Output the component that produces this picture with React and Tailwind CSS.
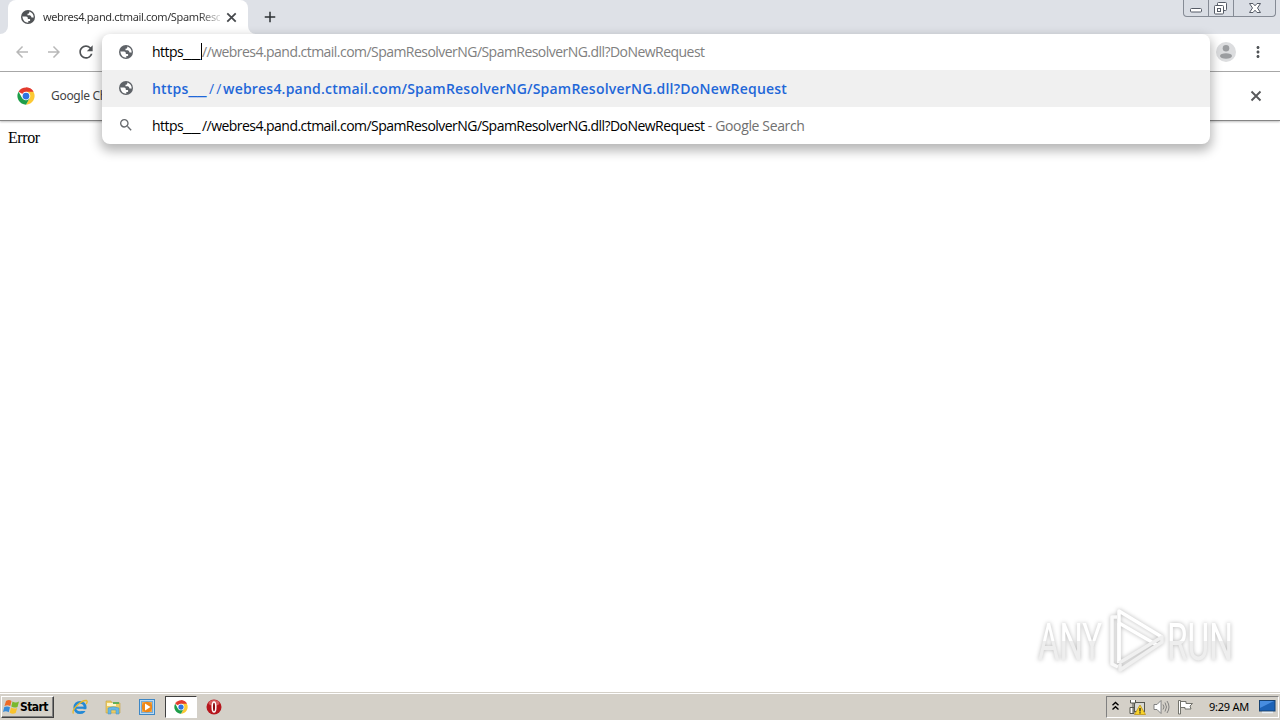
import React from "react";
import { MdArrowBack, MdArrowForward, MdRefresh, MdAdd, MdSearch, MdMoreVert } from "react-icons/md";

const HOST_PATH = "webres4.pand.ctmail.com/SpamResolverNG/SpamResolverNG.dll?DoNewRequest";

function Globe({ className }) {
  return (
    <svg viewBox="0 0 16 16" className={className}>
      <circle cx="8" cy="8" r="7" fill="currentColor" />
      <path d="M2.300 7.500H6.200Q7.800 7.500 7.800 9V10H9.800Q10.800 11 9.800 12H8.300V13.700Q3.200 13.700 2.300 7.500Z" fill="#fff" />
      <path d="M9.300 2.500V3.500Q9.300 4.700 7.500 4.800V6.300H9.800Q11.300 6.500 11.500 8.500H13.700Q13.700 4 9.300 2.500Z" fill="#fff" />
    </svg>
  );
}

function Cross({ className }) {
  return (
    <svg viewBox="0 0 16 16" className={className} fill="none" stroke="currentColor" strokeWidth="1.900">
      <path d="M3.500 3.500L12.500 12.500M12.500 3.500L3.500 12.500" />
    </svg>
  );
}

function ChromeLogo({ className }) {
  return (
    <svg viewBox="0 0 48 48" className={className}>
      <circle cx="24" cy="24" r="23" fill="#fff" />
      <path d="M24 24 L4.1 12.5 A23 23 0 0 1 43.9 12.5 Z" fill="#e33b2e" />
      <path d="M24 1 A23 23 0 0 1 43.9 12.5 H24 Z" fill="#e33b2e" />
      <path d="M43.9 12.5 A23 23 0 0 1 24 47 L34 29.5 L24 12.5 Z" fill="#fcc934" />
      <path d="M24 47 A23 23 0 0 1 4.1 12.5 L14 29.7 L34 29.5 Z" fill="#1e9e4a" />
      <circle cx="24" cy="24" r="11.5" fill="#fff" />
      <circle cx="24" cy="24" r="9" fill="#2f74e0" />
    </svg>
  );
}

function WindowControls() {
  return (
    <div className="flex h-[17px] w-[93px] rounded-b-[4px] border border-t-0 border-[#858b95] bg-[#d9dde4]">
      <div className="w-[25px] border-r border-[#858b95]">
        <svg viewBox="0 0 24 16" className="h-4 w-6"><rect x="6.500" y="8.500" width="11" height="3.500" rx="1" fill="#fff" stroke="#555b66" /></svg>
      </div>
      <div className="w-[25px] border-r border-[#858b95]">
        <svg viewBox="0 0 24 16" className="h-4 w-6" fill="#fff" stroke="#555b66">
          <rect x="8.500" y="2.500" width="9" height="8" rx="1" />
          <rect x="5.500" y="5.500" width="9" height="8.500" rx="1" />
          <rect x="8.500" y="8.500" width="3" height="3" />
        </svg>
      </div>
      <div className="flex flex-1 justify-center">
        <svg viewBox="0 0 14 16" className="h-4 w-3.5">
          <path d="M1.500 3.500h3.500l2 2.300 2-2.300h3.500L9.500 8l3 4.500H9L7 10.200 5 12.500H1.500l3-4.500z" fill="#fff" stroke="#555b66" />
        </svg>
      </div>
    </div>
  );
}

function TabStrip() {
  return (
    <div className="flex h-[34px] bg-[#dee1e7]">
      <div className="w-2 bg-white"><div className="h-full w-2 rounded-br-lg bg-[#dee1e7]" /></div>
      <div className="flex w-60 items-center rounded-t-lg bg-white pl-[12px] pr-[8px]">
        <Globe className="size-4 shrink-0 text-[#505356]" />
        <div className="ml-[7px] w-[177px] whitespace-nowrap bg-gradient-to-r from-[#303030] from-88% to-[#30303030] bg-clip-text text-[11px] leading-4 tracking-[-0.37px] text-transparent">
          webres4.pand.ctmail.com/SpamResc
        </div>
        <Cross className="ml-[4px] size-[15px] shrink-0 text-[#45484c]" />
      </div>
      <div className="w-2 bg-white"><div className="h-full w-2 rounded-bl-lg bg-[#dee1e7]" /></div>
      <MdAdd className="ml-[5px] mt-[8px] size-[18px] text-[#2d3034]" />
      <div className="ml-auto pr-1"><WindowControls /></div>
    </div>
  );
}

function Toolbar() {
  return (
    <div className="flex h-[38px] items-center border-b border-[#aaaaaa] bg-white pb-px pl-[13px]">
      <MdArrowBack className="size-[18px] text-[#b8b8b8]" />
      <MdArrowForward className="ml-[14px] size-[18px] text-[#b8b8b8]" />
      <MdRefresh className="ml-[13px] size-[20px] text-[#505356]" />
      <svg viewBox="0 0 20 20" className="ml-auto size-5">
        <circle cx="10" cy="10" r="10" fill="#dcdddf" />
        <circle cx="10" cy="6.300" r="3.300" fill="#9b9da0" />
        <ellipse cx="10" cy="14" rx="6" ry="2.700" fill="#9b9da0" />
      </svg>
      <MdMoreVert className="ml-[13px] mr-[13px] size-[18px] text-[#505356]" />
    </div>
  );
}

function Infobar() {
  return (
    <div className="flex h-[49px] items-center border-b border-[#858585] bg-white pl-[17px] shadow-[0_1px_2px_#00000040]">
      <ChromeLogo className="size-[18px]" />
      <span className="ml-[16px] text-[12px] tracking-[-0.3px] text-[#444]">Google Chrome</span>
      <Cross className="ml-auto mr-[16px] size-4 text-[#58595b]" />
    </div>
  );
}

function TypedPrefix() {
  return <>https<span className="font-['Liberation_Sans',sans-serif] text-[15.5px] leading-none tracking-normal">__</span></>;
}

function Omnibox() {
  return (
    <div className="absolute left-[102px] top-[34px] w-[1108px] rounded-lg bg-white font-['Open_Sans',sans-serif] text-[14px] leading-5 shadow-[0_5px_11px_2px_#00000048]">
      <div className="flex h-9 items-center pl-4">
        <Globe className="size-4 text-[#5f6368]" />
        <div className="ml-[18px] flex whitespace-nowrap pb-px tracking-[-0.54px] text-black">
          <div className="w-[49px]"><TypedPrefix /></div>
          <span className="h-[17px] w-px self-center bg-black" />
          <span className="text-[#808080]">//{HOST_PATH}</span>
        </div>
      </div>
      <div className="flex h-[37px] items-center bg-[#f0f0f0] pl-4">
        <Globe className="-mt-px size-4 text-[#5f6368]" />
        <div className="ml-[18px] flex whitespace-nowrap text-[#1f67d8]">
          <div className="w-[57px] font-semibold tracking-[0.2px]">https<span className="font-['Liberation_Sans',sans-serif] text-[16px] font-normal leading-none tracking-normal">__</span></div>
          <span className="w-[14px] tracking-[2px]">//</span>
          <span className="font-semibold tracking-[0.21px]">{HOST_PATH}</span>
        </div>
      </div>
      <div className="flex h-[37px] items-center pl-4">
        <MdSearch className="-mt-px size-4 text-[#66696d]" />
        <div className="ml-[18px] flex whitespace-pre tracking-[-0.54px] text-black">
          <div className="w-[50px]"><TypedPrefix /></div>
          <span>//{HOST_PATH}</span>
          <span className="tracking-[-0.36px] text-[#707070]"> - Google Search</span>
        </div>
      </div>
    </div>
  );
}

function Watermark() {
  return (
    <svg viewBox="0 0 204 68" className="absolute left-[1037px] top-[606px] h-[68px] w-[204px] font-['Roboto',sans-serif] text-[51px] drop-shadow-[0_0_2px_#00000048]">
      <defs>
        <linearGradient id="half" gradientUnits="userSpaceOnUse" x1="0" y1="17" x2="0" y2="54">
          <stop offset="0.5" stopColor="#fff" /><stop offset="0.5" stopColor="#eeeeee" />
        </linearGradient>
      </defs>
      <text x="1" y="54" textLength="64" lengthAdjust="spacingAndGlyphs" fill="url(#half)">ANY</text>
      <text x="130" y="54" textLength="66" lengthAdjust="spacingAndGlyphs" fill="url(#half)">RUN</text>
      <g fill="none" strokeWidth="3.500" strokeLinejoin="round">
        <path d="M80 11H75V58L81 61" stroke="#fafafa" />
        <path d="M82 17V57" stroke="#f0f0f0" />
        <path d="M82 57V5L125 31" stroke="#fff" />
        <path d="M82 17L120 39" stroke="#fff" />
        <path d="M82 57L125 31V36L83 64V58" stroke="#f0f0f0" />
      </g>
    </svg>
  );
}

function WindowsFlag() {
  return (
    <svg viewBox="0 0 17 16" className="h-4 w-[17px]">
      <path d="M3 2Q6 0 8.500 2L7.300 7Q4.500 5.500 1.500 7Z" fill="#ef6a24" />
      <path d="M9.500 2.500Q12.500 4.500 16 2.500L14.500 8Q11 9.300 8.300 7.500Z" fill="#79b82c" />
      <path d="M1.300 8Q4.300 6.700 7 8.300L5.700 13.300Q3 11.500 0 13Z" fill="#388bd8" />
      <path d="M8 8.600Q11 10.300 14.200 9L12.700 14Q9.500 15.500 6.700 13.700Z" fill="#f9c32d" />
    </svg>
  );
}

function QuickLaunch() {
  return (
    <>
      <svg viewBox="0 0 16 16" className="ml-[18px] size-4" fill="none">
        <circle cx="8" cy="8.500" r="5.200" stroke="#2489d5" strokeWidth="2.800" />
        <path d="M4 8.700H12.500" stroke="#2489d5" strokeWidth="2.200" />
        <path d="M10 10.200H15V12H9Z" fill="#d4d0c8" />
        <path d="M1.500 14.500C-1 11 9 1 14.500 1.500C16 2.500 14.500 4.500 14 5" stroke="#e8b829" strokeWidth="1.300" />
      </svg>
      <svg viewBox="0 0 16 16" className="ml-[17px] size-4">
        <path d="M1 2H6L7 4H15V14H1Z" fill="#edcc62" stroke="#c5a13f" strokeWidth="0.600" />
        <path d="M2 4H11V7H2Z" fill="#fff6c9" /><path d="M8 3H14V5H8Z" fill="#63af57" />
        <path d="M3 15V9Q8 6.500 14 9V15H11V11H6V15Z" fill="#66b7e3" stroke="#4a93bf" strokeWidth="0.500" />
      </svg>
      <svg viewBox="0 0 16 16" className="ml-[18px] size-4">
        <rect x="0.500" y="0.500" width="15" height="15" fill="#b9daf3" stroke="#3e87c5" />
        <rect x="2.500" y="2.500" width="11" height="11" fill="#f3a64a" stroke="#75abd6" />
        <circle cx="8" cy="8" r="5.200" fill="#ee8717" /><path d="M6 4.500L11.500 8L6 11.500Z" fill="#fff" />
      </svg>
      <div className="ml-[10px] flex h-[22px] w-8 items-center justify-center border border-b-white border-l-[#404040] border-r-white border-t-[#404040] bg-white">
        <ChromeLogo className="size-[14px]" />
      </div>
      <svg viewBox="0 0 16 16" className="ml-[9px] size-4">
        <circle cx="8" cy="8" r="7.500" fill="#b6161d" /><ellipse cx="8" cy="4" rx="5.500" ry="3" fill="#d75b5d" />
        <ellipse cx="8" cy="8" rx="1.800" ry="5" fill="#8c0c12" stroke="#fff" strokeWidth="1.500" />
      </svg>
    </>
  );
}

function SystemTray() {
  return (
    <div className="ml-auto mr-px flex h-[22px] w-[173px] items-center border border-b-white border-l-[#808080] border-r-white border-t-[#808080] pl-[4px]">
      <svg viewBox="0 0 9 10" className="-mt-[3px] h-2.5 w-[9px]" fill="none" stroke="#000" strokeWidth="1.400"><path d="M1.500 4.300L4.500 1.500L7.500 4.300M1.500 8.500L4.500 5.700L7.500 8.500" /></svg>
      <svg viewBox="0 0 17 16" className="ml-[9px] h-4 w-[17px]">
        <rect x="5.500" y="3.500" width="10" height="9" fill="#d9d9d3" stroke="#55564f" />
        <path d="M1.500 1V4H6.500V1M4 4V14M1 8.500H5V14.500H1Z" fill="#fff" stroke="#55564f" />
        <path d="M11 6L16.500 15.500H5.500Z" fill="#f9d42a" stroke="#b98d09" strokeWidth="0.700" /><path d="M11 9V12.500M11 13.300V14.500" stroke="#252525" strokeWidth="1.300" />
      </svg>
      <svg viewBox="0 0 17 16" className="ml-[7px] h-4 w-[17px]" fill="none" stroke="#777" strokeWidth="0.900">
        <path d="M1 5.500H4L8 1.500V14.500L4 10.500H1Z" fill="#fff" />
        <path d="M10 5.500Q12 8 10 10.500M12 3.500Q15 8 12 12.500M14 2Q18 8 14 14" />
      </svg>
      <svg viewBox="0 0 17 16" className="ml-[7px] h-4 w-[17px]" fill="#fff" stroke="#65655f" strokeWidth="0.900">
        <path d="M1.500 1.500H3.500V15H1.500Z" /><path d="M3.500 2.500H9V4.500H15.500L13 7L14 10H8V8.500H3.500Z" />
      </svg>
      <span className="ml-[15px] w-[42px] whitespace-nowrap text-[11px] tracking-[-0.25px] text-black">9:29 AM</span>
      <svg viewBox="0 0 17 14" className="ml-[8px] h-3.5 w-[17px]">
        <rect x="0.500" y="0.500" width="15.500" height="10.500" fill="#1d63b7" stroke="#174271" />
        <path d="M1 1H15L1 8Z" fill="#478de0" /><path d="M3 12.500H14" stroke="#e7eef5" strokeWidth="1.500" />
      </svg>
    </div>
  );
}

function Taskbar() {
  return (
    <div className="flex h-7 items-center border-t border-[#d4d0c8] bg-[#d4d0c8] pt-px shadow-[inset_0_1px_0_#fff]">
      <div className="ml-px flex h-[22px] w-[53px] items-center border border-b-[#404040] border-l-white border-r-[#404040] border-t-white pl-px shadow-[inset_-1px_-1px_0_#808080]">
        <WindowsFlag />
        <span className="font-['DejaVu_Sans_Condensed','DejaVu_Sans',sans-serif] text-[12px] font-bold tracking-[-0.6px] text-black">Start</span>
      </div>
      <QuickLaunch />
      <SystemTray />
    </div>
  );
}

export default function App() {
  return (
    <div className="relative flex h-[720px] w-[1280px] flex-col overflow-hidden bg-white font-['Noto_Sans',sans-serif]">
      <TabStrip />
      <Toolbar />
      <Infobar />
      <main className="flex-1 px-2 pt-[8px] font-['Liberation_Serif',serif] text-[16px] leading-[18px] tracking-[-0.4px] text-black">Error</main>
      <Taskbar />
      <Omnibox />
      <Watermark />
    </div>
  );
}
